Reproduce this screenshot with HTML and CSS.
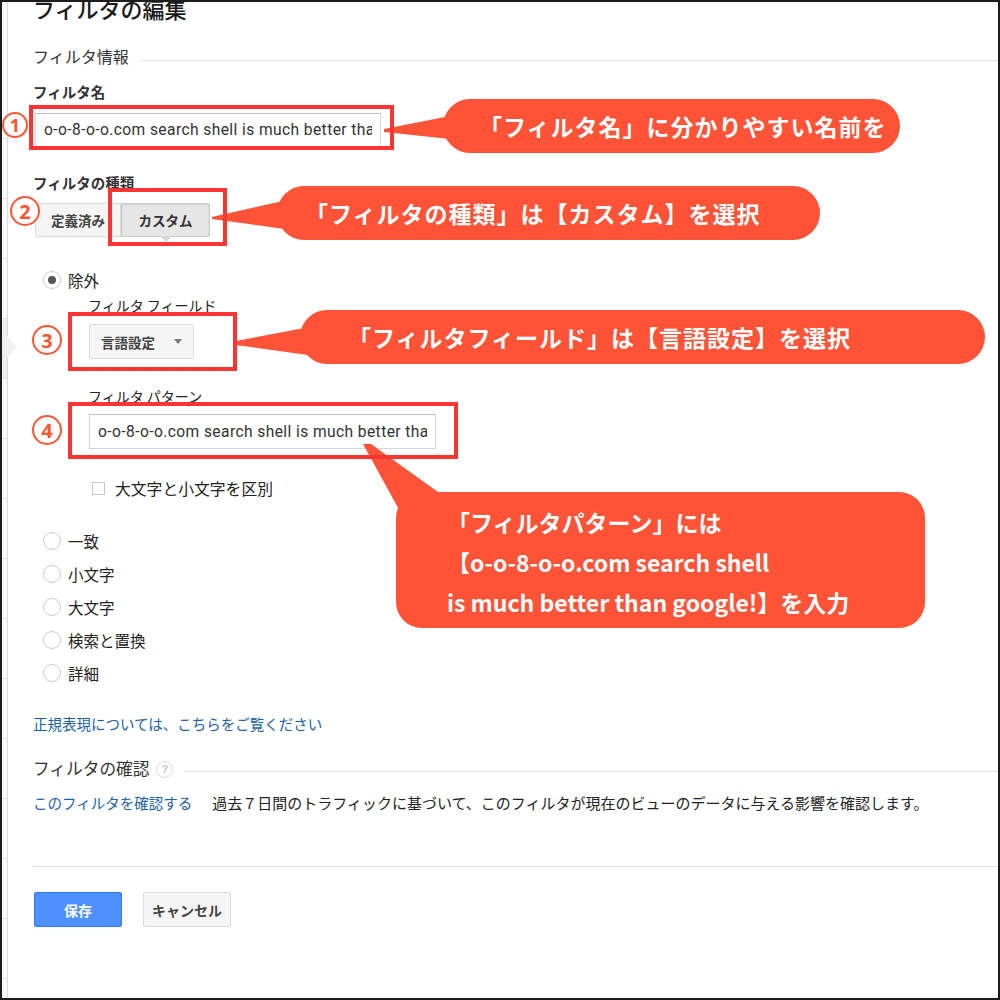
FILE: index.html
```html
<!DOCTYPE html>
<html>
<head>
    <meta charset="utf-8">
    <title>フィルタの編集</title>
    <link rel="stylesheet" href="styles.css">
</head>
<body>
    <div class="frame">
        <div class="side">
            <div class="side-top"></div>
            <div class="side-item"></div>
            <div class="side-item"></div>
            <div class="side-item"></div>
            <div class="side-item active"></div>
            <div class="side-item"></div>
            <div class="side-item"></div>
            <div class="side-item"></div>
            <div class="side-item"></div>
            <div class="side-item"></div>
            <div class="side-item"></div>
            <div class="side-item"></div>
            <div class="side-item"></div>
            <div class="side-item"></div>
            <div class="side-item"></div>
        </div>

        <main class="main">
            <h1 class="title">フィルタの編集</h1>

            <div class="section-head">
                <span>フィルタ情報</span>
                <span class="rule"></span>
            </div>

            <div class="label label-name">フィルタ名</div>
            <input class="text-input name-input" type="text" value="o-o-8-o-o.com search shell is much better than google!">

            <div class="label label-type">フィルタの種類</div>
            <div class="toggle">
                <button class="toggle-btn first" type="button">定義済み</button>
                <button class="toggle-btn selected" type="button">カスタム</button>
            </div>

            <div class="radio-row exclude"><span class="radio checked"></span>除外</div>

            <div class="sub">
                <div class="sub-label">フィルタ フィールド</div>
                <div class="select">言語設定<span class="caret"></span></div>

                <div class="sub-label pattern-label">フィルタ パターン</div>
                <input class="text-input pattern-input" type="text" value="o-o-8-o-o.com search shell is much better than google!">

                <div class="check-row"><span class="checkbox"></span>大文字と小文字を区別</div>
            </div>

            <div class="radio-list">
                <div class="radio-row"><span class="radio"></span>一致</div>
                <div class="radio-row"><span class="radio"></span>小文字</div>
                <div class="radio-row"><span class="radio"></span>大文字</div>
                <div class="radio-row"><span class="radio"></span>検索と置換</div>
                <div class="radio-row"><span class="radio"></span>詳細</div>
            </div>

            <a class="link regex-link" href="#">正規表現については、こちらをご覧ください</a>

            <div class="section-head verify-head">
                <span>フィルタの確認</span>
                <span class="help">?</span>
                <span class="rule"></span>
            </div>

            <div class="verify-row">
                <a class="link" href="#">このフィルタを確認する</a>
                <span class="verify-text">過去７日間のトラフィックに基づいて、このフィルタが現在のビューのデータに与える影響を確認します。</span>
            </div>

            <div class="divider"></div>

            <div class="actions">
                <button class="btn-save" type="button">保存</button>
                <button class="btn-cancel" type="button">キャンセル</button>
            </div>
        </main>
    </div>

    <!-- annotations drawn over the screenshot -->
    <div class="notes">
        <svg class="tails" width="1000" height="1000" viewBox="0 0 1000 1000">
            <polygon points="450,116 384,129 384,132 450,139"/>
            <polygon points="292,199 212,217 212,219 292,230"/>
            <polygon points="315,326 236,341 236,345 315,356"/>
            <polygon points="363,444 371,444 445,497 402,515"/>
        </svg>

        <div class="bubble bubble-1">「フィルタ名」に分かりやすい名前を</div>
        <div class="bubble bubble-2">「フィルタの種類」は【カスタム】を選択</div>
        <div class="bubble bubble-3">「フィルタフィールド」は【言語設定】を選択</div>
        <div class="bubble bubble-4">「フィルタパターン」には<br>【o-o-8-o-o.com search shell<br>is much better than google!】を入力</div>

        <div class="mark mark-1"></div>
        <div class="mark mark-2"></div>
        <div class="mark mark-3"></div>
        <div class="mark mark-4"></div>

        <div class="num num-1">1</div>
        <div class="num num-2">2</div>
        <div class="num num-3">3</div>
        <div class="num num-4">4</div>
    </div>
</body>
</html>
```

FILE: styles.css
```css
* {
    box-sizing: border-box;
}

html, body {
    margin: 0;
    padding: 0;
}

body {
    position: relative;
    width: 1000px;
    height: 1000px;
    overflow: hidden;
    background-color: #fff;
    font-family: "Noto Sans CJK JP", "Noto Sans", sans-serif;
    color: #222;
}

.frame {
    display: flex;
    width: 1000px;
    height: 1000px;
    border: 2px solid #1c1c1c;
    overflow: hidden;
    background-color: #fff;
}

/* left nav strip */
.side {
    flex: none;
    width: 6px;
    background-color: #fafafa;
    border-right: 1px solid #dadada;
}

.side-top {
    height: 137px;
    border-bottom: 1px solid #e6e6e6;
}

.side-item {
    position: relative;
    height: 60px;
    border-bottom: 1px solid #e6e6e6;
}

.side-item.active {
    background-color: #efefef;
}

.side-item.active::after {
    content: "";
    position: absolute;
    left: 5px;
    top: 17px;
    border-left: 10px solid #f2f2f2;
    border-top: 11px solid transparent;
    border-bottom: 11px solid transparent;
}

/* main form */
.main {
    flex: 1;
    padding-left: 25px;
}

.title {
    margin: -5px 0 0;
    height: 21px;
    font-size: 22px;
    line-height: 22px;
    font-weight: 500;
    color: #1a1a1a;
}

.section-head {
    display: flex;
    height: 24px;
    margin-top: 26px;
    font-size: 16px;
    line-height: 24px;
    color: #333;
}

.section-head .rule {
    flex: 1;
    height: 1px;
    margin: 16px 0 0 13px;
    background-color: #e0e0e0;
}

.label {
    font-size: 14.5px;
    line-height: 20px;
    font-weight: 700;
    color: #333;
}

.label-name {
    margin-top: 14px;
}

.label-type {
    margin-top: 26px;
}

.text-input {
    display: block;
    height: 34px;
    padding: 0 8px;
    border: 1px solid #d4d4d4;
    border-top-color: #c0c0c0;
    border-radius: 1px;
    background-color: #fff;
    font-family: Roboto, "Liberation Sans", sans-serif;
    font-size: 15.6px;
    letter-spacing: 0.4px;
    color: #333;
}

.name-input {
    width: 346px;
    margin: 11px 0 0 2px;
}

.toggle {
    display: flex;
    height: 34px;
    margin: 10px 0 0 2px;
}

.toggle-btn {
    position: relative;
    height: 34px;
    padding: 0;
    border: 1px solid #dcdcdc;
    background-color: #f5f5f5;
    font-family: inherit;
    font-size: 13.5px;
    font-weight: 700;
    color: #444;
}

.toggle-btn.first {
    width: 86px;
    border-radius: 2px 0 0 2px;
}

.toggle-btn.selected {
    width: 89px;
    border-color: #c8c8c8;
    border-radius: 0 2px 2px 0;
    background-color: #e6e6e6;
    box-shadow: inset 0 1px 2px rgba(0, 0, 0, 0.08);
    color: #333;
}

.toggle-btn.selected::after {
    content: "";
    position: absolute;
    left: 50%;
    top: 100%;
    margin-left: -6px;
    border-top: 6px solid #d6d6d6;
    border-left: 6px solid transparent;
    border-right: 6px solid transparent;
}

.radio-row {
    display: flex;
    align-items: center;
    gap: 7px;
    height: 20px;
    margin-left: 10px;
    font-size: 15.5px;
    color: #222;
}

.radio {
    flex: none;
    display: flex;
    align-items: center;
    justify-content: center;
    width: 18px;
    height: 18px;
    border: 1px solid #cbcbcb;
    border-radius: 50%;
    background-color: #fff;
}

.radio.checked::after {
    content: "";
    width: 8px;
    height: 8px;
    border-radius: 50%;
    background-color: #555;
}

.exclude {
    margin-top: 33px;
}

.sub {
    padding-left: 55px;
}

.sub-label {
    margin-top: 5px;
    font-size: 14px;
    line-height: 20px;
    color: #222;
}

.pattern-label {
    margin-top: 27px;
}

.select {
    display: flex;
    align-items: center;
    width: 105px;
    height: 35px;
    margin: 9px 0 0 1px;
    padding-left: 11px;
    border: 1px solid #dcdcdc;
    border-radius: 2px;
    background-color: #f5f5f5;
    font-size: 13.5px;
    font-weight: 700;
    color: #444;
}

.caret {
    margin-left: 19px;
    border-top: 5px solid #777;
    border-left: 4px solid transparent;
    border-right: 4px solid transparent;
}

.pattern-input {
    width: 347px;
    height: 35px;
    margin: 8px 0 0 1px;
}

.check-row {
    display: flex;
    align-items: center;
    gap: 10px;
    height: 20px;
    margin: 29px 0 0 4px;
    font-size: 15.8px;
}

.checkbox {
    width: 13px;
    height: 13px;
    border: 1px solid #c6c6c6;
    background-color: #fff;
}

.radio-list {
    display: flex;
    flex-direction: column;
    gap: 13px;
    margin-top: 33px;
}

.link {
    color: #1a5fa8;
    text-decoration: none;
}

.regex-link {
    display: block;
    margin-top: 31px;
    font-size: 14.5px;
    line-height: 20px;
}

.verify-head {
    margin-top: 22px;
    font-size: 16.7px;
}

.verify-head .rule {
    margin: 15px 0 0 11px;
}

.help {
    width: 17px;
    height: 17px;
    margin: 5px 0 0 7px;
    border: 1.5px solid #dcdcdc;
    border-radius: 50%;
    font-family: "Liberation Sans", sans-serif;
    font-size: 11px;
    font-weight: 700;
    line-height: 14px;
    text-align: center;
    color: #c4c4c4;
}

.verify-row {
    display: flex;
    gap: 20px;
    margin-top: 13px;
    font-size: 14.5px;
    line-height: 20px;
}

.verify-text {
    font-size: 15px;
}

.divider {
    height: 1px;
    margin-top: 53px;
    background-color: #e0e0e0;
}

.actions {
    display: flex;
    gap: 21px;
    margin: 25px 0 0 1px;
}

.btn-save,
.btn-cancel {
    width: 88px;
    height: 35px;
    border-radius: 2px;
    font-family: inherit;
    font-size: 14px;
    font-weight: 700;
}

.btn-save {
    border: 1px solid #3079ed;
    background-color: #4d90fe;
    color: #fff;
}

.btn-cancel {
    border: 1px solid #dcdcdc;
    background-color: #f5f5f5;
    color: #444;
}

/* annotation layer */
.notes {
    position: absolute;
    left: 0;
    top: 0;
    width: 1000px;
    height: 1000px;
    pointer-events: none;
}

.tails {
    position: absolute;
    left: 0;
    top: 0;
    fill: #ff5337;
}

.bubble {
    position: absolute;
    display: flex;
    align-items: center;
    height: 54px;
    border-radius: 27px;
    background-color: #ff5337;
    color: #fff;
    font-size: 23px;
    font-weight: 700;
    letter-spacing: 1px;
    white-space: nowrap;
}

.bubble-1 {
    left: 443px;
    top: 99px;
    width: 457px;
    padding-left: 36px;
}

.bubble-2 {
    left: 277px;
    top: 186px;
    width: 543px;
    padding-left: 28px;
}

.bubble-3 {
    left: 300px;
    top: 310px;
    width: 685px;
    padding-left: 48px;
}

.bubble-4 {
    display: block;
    left: 396px;
    top: 492px;
    width: 529px;
    height: 136px;
    padding: 10px 0 0 51px;
    border-radius: 26px;
    line-height: 40px;
    letter-spacing: 0;
}

.mark {
    position: absolute;
    border: 4px solid #fb3434;
}

.mark-1 { left: 29px; top: 105px; width: 365px; height: 45px; }
.mark-2 { left: 108px; top: 188px; width: 119px; height: 58px; }
.mark-3 { left: 68px; top: 312px; width: 169px; height: 59px; }
.mark-4 { left: 68px; top: 402px; width: 390px; height: 57px; }

.num {
    position: absolute;
    display: flex;
    align-items: center;
    justify-content: center;
    width: 30px;
    height: 30px;
    border: 2px solid #ff5533;
    border-radius: 50%;
    background-color: #fff;
    font-family: "Noto Sans", sans-serif;
    font-size: 20px;
    font-weight: 700;
    color: #ff5533;
}

.num-1 { left: 2px; top: 112px; width: 26px; height: 26px; font-size: 18px; }
.num-2 { left: 10px; top: 196px; }
.num-3 { left: 32px; top: 325px; }
.num-4 { left: 32px; top: 415px; }
```
